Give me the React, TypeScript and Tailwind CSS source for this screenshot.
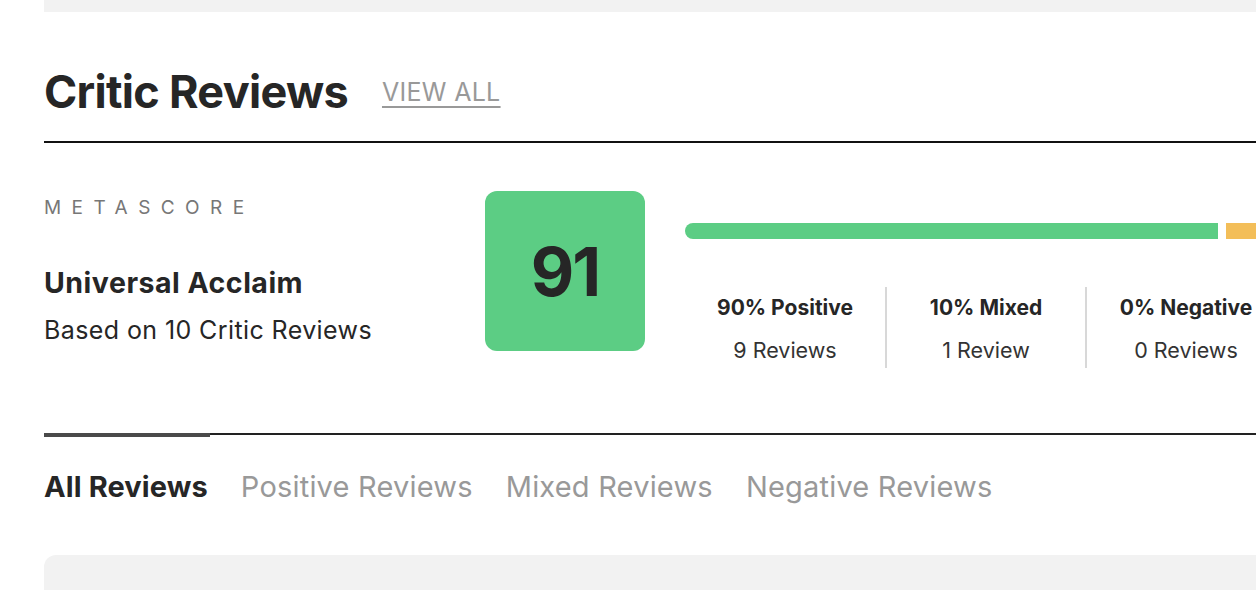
import React from 'react';

const breakdown = [
  { label: '90% Positive', count: '9 Reviews', share: 90, color: 'bg-[#5ccd84]' },
  { label: '10% Mixed', count: '1 Review', share: 10, color: 'bg-[#f3be59]' },
  { label: '0% Negative', count: '0 Reviews', share: 0, color: 'bg-[#f26464]' },
];

const tabs = ['Positive Reviews', 'Mixed Reviews', 'Negative Reviews'];

const App: React.FC = () => {
  return (
    <div className="w-[1256px] h-[590px] overflow-hidden bg-white font-['Inter',sans-serif] text-[#262626]">
      <div className="ml-[44px] w-[1300px]">
        <div className="h-[12px] bg-[#f2f2f2]" />

        {/* Header */}
        <div className="flex items-center gap-[34px] pt-[30px] h-[129px]">
          <h2 className="text-[45px] font-bold tracking-[-0.7px] leading-[56px]">Critic Reviews</h2>
          <a className="text-[25px] text-[#999] tracking-[0.3px] underline underline-offset-[5px] decoration-[2px] leading-[32px]">
            VIEW ALL
          </a>
        </div>
        <div className="h-[2px] bg-[#111]" />

        {/* Metascore */}
        <div className="flex h-[290px] pt-[48px]">
          <div className="w-[441px] pt-[5px]">
            <div className="text-[19px] tracking-[0.55em] text-[#777] leading-[24px]">METASCORE</div>
            <div className="mt-[46px] text-[28.5px] font-bold tracking-[0.5px] leading-[34px]">Universal Acclaim</div>
            <div className="mt-[14px] text-[25px] tracking-[0.4px] leading-[32px]">Based on 10 Critic Reviews</div>
          </div>

          <div className="w-[160px] h-[160px] rounded-[12px] bg-[#5ccd84] flex items-center justify-center">
            <span className="text-[67px] font-bold tracking-[-2px] leading-none">91</span>
          </div>

          <div className="ml-[40px] w-[600px] pt-[32px]">
            <div className="flex gap-[8px] h-[16px]">
              {breakdown.map((b) =>
                b.share > 0 ? (
                  <div key={b.label} className={`${b.color} h-full first:rounded-l-full`} style={{ flex: b.share }} />
                ) : null
              )}
            </div>
            <div className="flex mt-[48px]">
              {breakdown.map((b, i) => (
                <div
                  key={b.label}
                  className={`w-[200px] h-[81px] flex flex-col items-center justify-center gap-[16px] ${i > 0 ? 'border-l-2 border-[#d8d8d8]' : ''}`}
                >
                  <div className="text-[21px] font-bold leading-[26px] pt-[2px]">{b.label}</div>
                  <div className="text-[21.5px] text-[#333] leading-[26px]">{b.count}</div>
                </div>
              ))}
            </div>
          </div>
        </div>

        {/* Tab rule */}
        <div className="flex items-start">
          <div className="w-[166px] h-[4px] bg-[#4a4a4a]" />
          <div className="flex-1 h-[2px] bg-[#222]" />
        </div>

        {/* Tabs */}
        <div className="flex items-center gap-[33px] h-[100px]">
          <span className="text-[29px] font-bold tracking-[0.1px] leading-[36px]">All Reviews</span>
          {tabs.map((t) => (
            <span key={t} className="text-[29px] text-[#999] tracking-[0.2px] leading-[36px]">
              {t}
            </span>
          ))}
        </div>

        <div className="mt-[18px] h-[60px] rounded-tl-[12px] bg-[#f2f2f2]" />
      </div>
    </div>
  );
};

export default App;
